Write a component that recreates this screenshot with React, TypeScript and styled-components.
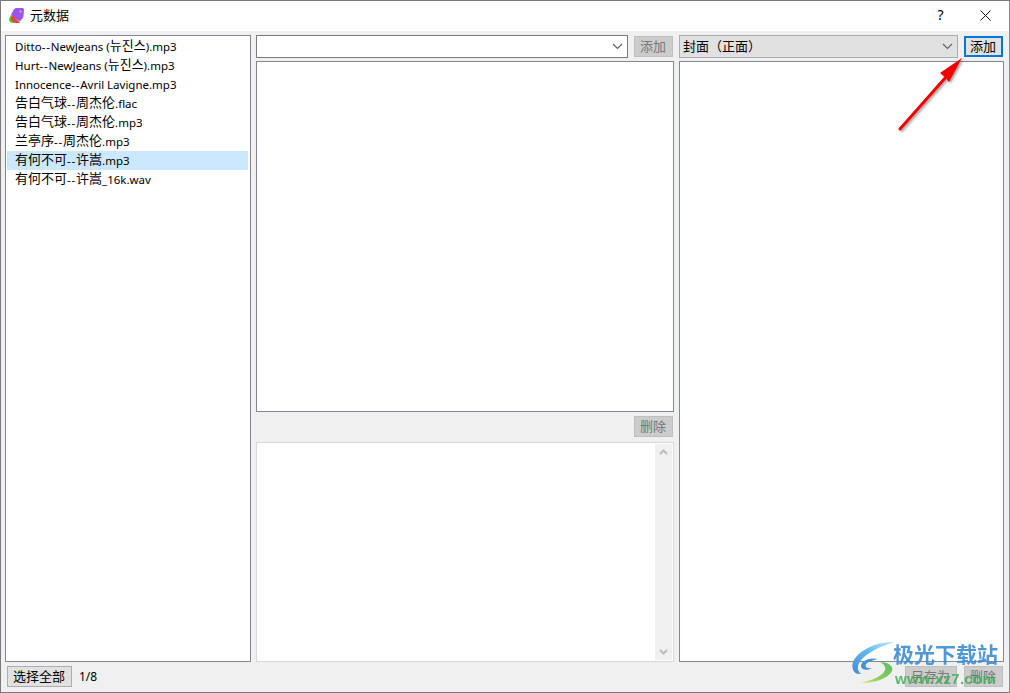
import React, { FC } from 'react';
import styled, { createGlobalStyle } from 'styled-components';

const GlobalStyle = createGlobalStyle`
  html, body {
    margin: 0;
    padding: 0;
    background: #f0f0f0;
  }
  body {
    font-family: "Noto Sans", "Liberation Sans", "Noto Sans CJK SC", sans-serif;
  }
`;

const Window = styled.div`
  position: relative;
  width: 1010px;
  height: 693px;
  box-sizing: border-box;
  border: 1px solid #7a7a7a;
  border-right-color: #8a8a8a;
  background: #f0f0f0;
  overflow: hidden;
  display: flex;
  flex-direction: column;
  color: #000;
  font-size: 11.5px;
`;

const TitleBar = styled.div`
  height: 30px;
  box-sizing: border-box;
  flex: none;
  background: #fff;
  display: flex;
  align-items: center;
  padding: 0 0 2px 7px;
`;

const TitleText = styled.span`
  margin: 0 0 2px 5px;
  font-family: "Noto Sans CJK SC", sans-serif;
  font-size: 13px;
`;

const TitleButtons = styled.div`
  margin-left: auto;
  display: flex;
  align-items: center;
  height: 100%;
`;

const HelpButton = styled.div`
  width: 46px;
  padding: 0 0 2px 3px;
  box-sizing: border-box;
  text-align: center;
  font-size: 14px;
`;

const CloseButton = styled.div`
  width: 46px;
  margin-right: 1px;
  display: flex;
  justify-content: center;
`;

const Body = styled.div`
  flex: 1;
  min-height: 0;
  display: grid;
  grid-template-columns: 246px 418px 325px;
  column-gap: 5px;
  padding: 4px 5px 0 4px;
`;

const Column = styled.div`
  display: flex;
  flex-direction: column;
  min-height: 0;
  min-width: 0;
`;

const FileList = styled.ul`
  list-style: none;
  margin: 0;
  padding: 1px 2px 1px 1px;
  height: 627px;
  box-sizing: border-box;
  background: #fff;
  border: 1px solid #828790;
`;

const FileRow = styled.li<{ $active?: boolean }>`
  height: 19px;
  line-height: 19px;
  padding-left: 8px;
  white-space: nowrap;
  background: ${p => (p.$active ? '#cce8ff' : 'transparent')};
`;

const Cjk = styled.span`
  font-family: "Noto Sans CJK SC", sans-serif;
  font-size: 13px;
  line-height: 1;
  vertical-align: 1px;
`;

const Dash = styled.span`
  letter-spacing: 0.8px;
`;

const BottomBar = styled.div`
  display: flex;
  align-items: center;
  gap: 7px;
  margin-top: 4px;
  padding-left: 2px;
`;

const Count = styled.span`
  font-size: 12px;
`;

const Row = styled.div`
  height: 23px;
  flex: none;
  display: flex;
  gap: 6px;
  align-items: center;
  padding-right: 1px;
`;

const Combo = styled.div<{ $filled?: boolean }>`
  flex: 1;
  height: 23px;
  min-width: 0;
  box-sizing: border-box;
  border: 1px solid ${p => (p.$filled ? '#adadad' : '#7a7a7a')};
  background: ${p => (p.$filled ? '#e1e1e1' : '#fff')};
  display: flex;
  align-items: center;
  padding: 0 3px 2px;
  font-family: "Noto Sans CJK SC", sans-serif;
  font-size: 13px;
`;

const ComboArrow = styled.svg`
  margin: 2px 1px 0 auto;
  flex: none;
`;

const Button = styled.button<{ $disabled?: boolean; $focused?: boolean; $w?: number }>`
  width: ${p => p.$w ?? 39}px;
  height: 21px;
  flex: none;
  margin: 0;
  padding: 0 1px 2px 0;
  box-sizing: border-box;
  font-family: "Noto Sans CJK SC", sans-serif;
  font-size: 13px;
  line-height: 15px;
  border: ${p => (p.$focused ? '2px solid #0078d7' : `1px solid ${p.$disabled ? '#bfbfbf' : '#adadad'}`)};
  background: ${p => (p.$disabled ? '#cccccc' : '#e1e1e1')};
  color: ${p => (p.$disabled ? '#787878' : '#000')};
`;

const Panel = styled.div<{ $h: number }>`
  height: ${p => p.$h}px;
  flex: none;
  margin-top: 3px;
  box-sizing: border-box;
  background: #fff;
  border: 1px solid #828790;
`;

const ButtonRow = styled.div`
  display: flex;
  justify-content: flex-end;
  gap: 7px;
  margin-top: 4px;
  padding-right: 1px;
`;

const TextPanel = styled.div`
  margin-top: 5px;
  height: 220px;
  flex: none;
  box-sizing: border-box;
  background: #fff;
  border: 1px solid #d9d9d9;
  padding: 1px;
  display: flex;
  justify-content: flex-end;
`;

const ScrollTrack = styled.div`
  width: 17px;
  background: #f0f0f0;
  display: flex;
  flex-direction: column;
  justify-content: space-between;
  align-items: center;
  padding: 5px 0;
  box-sizing: border-box;
`;

const ArrowOverlay = styled.svg`
  position: absolute;
  left: 889px;
  top: 49px;
  pointer-events: none;
`;

const WatermarkBox = styled.div`
  position: absolute;
  left: 847px;
  top: 637px;
  width: 160px;
  height: 55px;
  pointer-events: none;
  filter: blur(0.3px);
`;

const WatermarkLogo = styled.svg`
  position: absolute;
  left: 0;
  top: 0;
`;

const WatermarkTitle = styled.div`
  position: absolute;
  left: 45px;
  top: 3px;
  font-family: "Noto Sans CJK SC", sans-serif;
  font-size: 21px;
  font-weight: 700;
  line-height: 24px;
  color: rgba(60, 140, 210, 0.9);
  white-space: nowrap;
`;

const WatermarkUrl = styled.div`
  position: absolute;
  left: 47px;
  top: 32px;
  font-family: "Liberation Sans", sans-serif;
  font-size: 15px;
  font-weight: 700;
  letter-spacing: 0.3px;
  color: rgba(70, 170, 90, 0.85);
  white-space: nowrap;
`;

const files = [
  'Ditto--NewJeans (뉴진스).mp3',
  'Hurt--NewJeans (뉴진스).mp3',
  'Innocence--Avril Lavigne.mp3',
  '告白气球--周杰伦.flac',
  '告白气球--周杰伦.mp3',
  '兰亭序--周杰伦.mp3',
  '有何不可--许嵩.mp3',
  '有何不可--许嵩_16k.wav',
];

// chinese and korean runs are drawn a little bigger than the latin ones
const FileName: FC<{ name: string }> = ({ name }) => (
  <>
    {name.split(/([\u4e00-\u9fff\uac00-\ud7a3]+|--)/).map((part, index) => {
      if (part === '--') return <Dash key={index}>{part}</Dash>;
      return index % 2 ? <Cjk key={index}>{part}</Cjk> : part;
    })}
  </>
);

const Chevron: FC = () => (
  <ComboArrow width="11" height="7" viewBox="0 0 11 7">
    <path d="M1 1l4.5 4.5L10 1" fill="none" stroke="#606060" strokeWidth="1.1" />
  </ComboArrow>
);

const AppIcon: FC = () => (
  <svg width="17" height="17" viewBox="0 0 17 17">
    <path d="M3 8l4 8H4.5A4 4 0 0 1 1 12z" fill="#4fc63a" />
    <path d="M4 7l8 9H8a5 5 0 0 1-5-5z" fill="#ea4a35" />
    <path d="M8 1h6.5a1.5 1.5 0 0 1 1.5 1.6l-.5 6.4a5 5 0 0 1-1.5 3L11.5 14.5 3 7.5 5.5 3A4 4 0 0 1 8 1z" fill="#9a55ea" />
    <circle cx="12.5" cy="4.5" r="1" fill="#d6bdf8" />
  </svg>
);

const App: FC = () => {
  return (
    <Window>
      <GlobalStyle />
      <TitleBar>
        <AppIcon />
        <TitleText>元数据</TitleText>
        <TitleButtons>
          <HelpButton>?</HelpButton>
          <CloseButton>
            <svg width="11" height="11" viewBox="0 0 11 11">
              <path d="M0.5 0.5l10 10M10.5 0.5l-10 10" stroke="#111" strokeWidth="1" />
            </svg>
          </CloseButton>
        </TitleButtons>
      </TitleBar>
      <Body>
        <Column>
          <FileList>
            {files.map((name, index) => (
              <FileRow key={`file-${index}`} $active={index === 6}>
                <FileName name={name} />
              </FileRow>
            ))}
          </FileList>
          <BottomBar>
            <Button $w={65}>选择全部</Button>
            <Count>1/8</Count>
          </BottomBar>
        </Column>
        <Column>
          <Row>
            <Combo><Chevron /></Combo>
            <Button $disabled>添加</Button>
          </Row>
          <Panel $h={351} />
          <ButtonRow>
            <Button $disabled>删除</Button>
          </ButtonRow>
          <TextPanel>
            <ScrollTrack>
              <svg width="9" height="6" viewBox="0 0 9 6"><path d="M1 5l3.5-3.5L8 5" fill="none" stroke="#bdbdbd" strokeWidth="2" /></svg>
              <svg width="9" height="6" viewBox="0 0 9 6"><path d="M1 1l3.5 3.5L8 1" fill="none" stroke="#bdbdbd" strokeWidth="2" /></svg>
            </ScrollTrack>
          </TextPanel>
        </Column>
        <Column>
          <Row>
            <Combo $filled>封面（正面）<Chevron /></Combo>
            <Button $focused>添加</Button>
          </Row>
          <Panel $h={601} />
          <ButtonRow>
            <Button $disabled $w={52}>另存为</Button>
            <Button $disabled>删除</Button>
          </ButtonRow>
        </Column>
      </Body>
      <ArrowOverlay width="80" height="90" viewBox="0 0 80 90">
        <defs>
          <filter id="arrow-shadow" x="-20%" y="-20%" width="150%" height="150%">
            <feDropShadow dx="1.5" dy="1.5" stdDeviation="1.2" floodColor="#000" floodOpacity="0.4" />
          </filter>
        </defs>
        <g filter="url(#arrow-shadow)">
          <path d="M10 79L56 27" stroke="#f00000" strokeWidth="3" strokeLinecap="round" />
          <path d="M72 8L50 23l5 4 4 5z" fill="#f00000" />
        </g>
      </ArrowOverlay>
      <WatermarkBox>
        <WatermarkLogo width="48" height="50" viewBox="0 0 48 50">
          <defs>
            <linearGradient id="wm-blue" x1="1" y1="0" x2="0" y2="1">
              <stop offset="0" stopColor="#cfe6f2" />
              <stop offset="0.45" stopColor="#62bdf0" />
              <stop offset="1" stopColor="#4a86d0" />
            </linearGradient>
            <linearGradient id="wm-green" x1="1" y1="0" x2="0" y2="1">
              <stop offset="0" stopColor="#5dbb62" />
              <stop offset="0.6" stopColor="#86cf62" />
              <stop offset="1" stopColor="#e4e76a" />
            </linearGradient>
          </defs>
          <path d="M47 4C30 3 10 12 5 24c-2 7 1 13 8 12-5-4-4-11 3-17C24 12 36 7 47 4z" fill="url(#wm-blue)" />
          <path d="M30 21c-8-2-17 2-17 7 0 4 7 5 11 2-6 1-8-2-5-5 3-2 7-3 11-4z" fill="#4a90d4" />
          <path d="M32 24c8 0 14 4 12 9-4 8-18 12-31 12 11-3 22-7 24-13 1-3-1-6-5-8z" fill="url(#wm-green)" />
        </WatermarkLogo>
        <WatermarkTitle>极光下载站</WatermarkTitle>
        <WatermarkUrl>www.xz7.com</WatermarkUrl>
      </WatermarkBox>
    </Window>
  );
};

export default App;
